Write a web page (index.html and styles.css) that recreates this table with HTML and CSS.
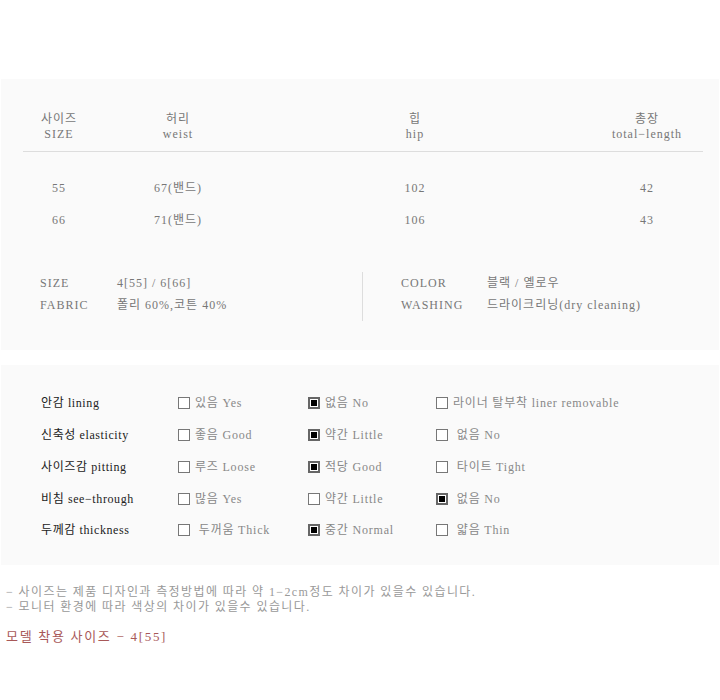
FILE: index.html
```html
<!DOCTYPE html>
<html lang="ko">
<head>
  <meta charset="UTF-8">
  <meta name="viewport" content="width=device-width, initial-scale=1.0">
  <title>Size info</title>
  <link rel="stylesheet" href="styles.css">
</head>
<body>
  <section class="panel size-panel">
    <div class="size-head">
      <div class="cell">사이즈<br>SIZE</div>
      <div class="cell">허리<br>weist</div>
      <div class="cell">힙<br>hip</div>
      <div class="cell">총장<br>total−length</div>
    </div>
    <div class="size-row">
      <div class="cell">55</div>
      <div class="cell">67(밴드)</div>
      <div class="cell">102</div>
      <div class="cell">42</div>
    </div>
    <div class="size-row">
      <div class="cell">66</div>
      <div class="cell">71(밴드)</div>
      <div class="cell">106</div>
      <div class="cell">43</div>
    </div>

    <div class="spec">
      <dl class="spec-col">
        <dt>SIZE</dt><dd>4[55] / 6[66]</dd>
        <dt>FABRIC</dt><dd>폴리 60%,코튼 40%</dd>
      </dl>
      <dl class="spec-col spec-right">
        <dt>COLOR</dt><dd>블랙 / 옐로우</dd>
        <dt>WASHING</dt><dd>드라이크리닝(dry cleaning)</dd>
      </dl>
    </div>
  </section>

  <section class="panel feel-panel">
    <div class="feel-row">
      <div class="feel-label">안감 lining</div>
      <div class="opt"><span class="box"></span>있음 Yes</div>
      <div class="opt"><span class="box on"></span>없음 No</div>
      <div class="opt"><span class="box"></span>라이너 탈부착 liner removable</div>
    </div>
    <div class="feel-row">
      <div class="feel-label">신축성 elasticity</div>
      <div class="opt"><span class="box"></span>좋음 Good</div>
      <div class="opt"><span class="box on"></span>약간 Little</div>
      <div class="opt"><span class="box"></span>&nbsp;없음 No</div>
    </div>
    <div class="feel-row">
      <div class="feel-label">사이즈감 pitting</div>
      <div class="opt"><span class="box"></span>루즈 Loose</div>
      <div class="opt"><span class="box on"></span>적당 Good</div>
      <div class="opt"><span class="box"></span>&nbsp;타이트 Tight</div>
    </div>
    <div class="feel-row">
      <div class="feel-label">비침 see−through</div>
      <div class="opt"><span class="box"></span>많음 Yes</div>
      <div class="opt"><span class="box"></span>약간 Little</div>
      <div class="opt"><span class="box on"></span>&nbsp;없음 No</div>
    </div>
    <div class="feel-row last">
      <div class="feel-label">두께감 thickness</div>
      <div class="opt"><span class="box"></span>&nbsp;두꺼움 Thick</div>
      <div class="opt"><span class="box on"></span>중간 Normal</div>
      <div class="opt"><span class="box"></span>&nbsp;얇음 Thin</div>
    </div>
  </section>

  <div class="notes">
    <p>− 사이즈는 제품 디자인과 측정방법에 따라 약 1−2cm정도 차이가 있을수 있습니다.<br>− 모니터 환경에 따라 색상의 차이가 있을수 있습니다.</p>
    <p class="model">모델 착용 사이즈 − 4[55]</p>
  </div>
</body>
</html>
```

FILE: styles.css
```css
body {
  margin: 0;
  background: #fff;
  font-family: "Liberation Serif", "Noto Sans CJK KR", serif;
  font-size: 12px;
  color: #777;
}
.panel {
  background: #fafafa;
  margin: 0 1px;
}

/* size table */
.size-panel {
  margin-top: 79px;
  padding: 33px 16px 29px 22px;
}
.size-head,
.size-row {
  display: grid;
  grid-template-columns: 72px 166px 308px 1fr;
  text-align: center;
  letter-spacing: 1px;
}
.size-head {
  line-height: 15px;
  padding-bottom: 9px;
  border-bottom: 1px solid #ddd;
  margin-bottom: 20px;
}
.size-head .cell:last-child,
.size-row .cell:last-child {
  padding-left: 22px;
}
.size-row {
  line-height: 32px;
}

/* spec block */
.spec {
  display: flex;
  margin: 36px 0 0 17px;
}
.spec-col {
  display: grid;
  grid-template-columns: 77px 1fr;
  line-height: 22px;
  margin: 0;
  width: 322px;
  padding-bottom: 5px;
  letter-spacing: 1px;
}
.spec-col dt,
.spec-col dd {
  margin: 0;
}
.spec-right {
  grid-template-columns: 86px 1fr;
  border-left: 1px solid #ddd;
  padding-left: 38px;
  width: auto;
}

/* fit checklist */
.feel-panel {
  margin-top: 15px;
  padding: 22px 0 20px 40px;
}
.feel-row {
  display: grid;
  grid-template-columns: 137px 130px 128px 1fr;
  line-height: 32px;
}
.feel-row.last {
  line-height: 30px;
}
.feel-label {
  color: #222;
  letter-spacing: .6px;
}
.opt {
  display: flex;
  align-items: center;
  color: #888;
  letter-spacing: .8px;
}
.box {
  width: 10px;
  height: 10px;
  border: 1px solid #777;
  background: #fff;
  margin-right: 5px;
  flex: none;
}
.box.on {
  width: 8px;
  height: 8px;
  border: 2px solid #666;
  background: #000;
  box-shadow: inset 0 0 0 1px #fff;
}

/* notes */
.notes {
  padding: 20px 6px 0;
}
.notes p {
  margin: 0;
  line-height: 15px;
  color: #999;
  letter-spacing: 1.4px;
}
.notes .model {
  margin-top: 14px;
  line-height: 16px;
  font-size: 13px;
  color: #a85858;
  letter-spacing: 1.7px;
}
```
